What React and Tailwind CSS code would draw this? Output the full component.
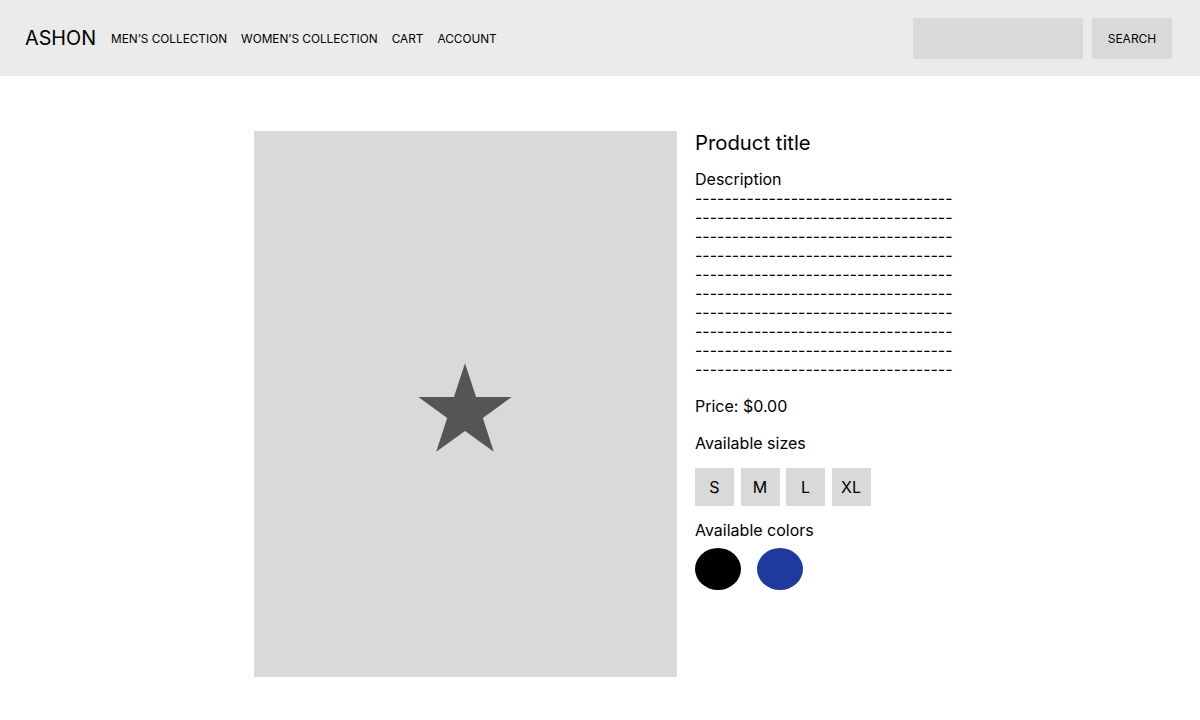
const navLinks = ["MEN’S COLLECTION", "WOMEN’S COLLECTION", "CART", "ACCOUNT"];
const sizes = ["S", "M", "L", "XL"];
const colors = ["bg-black", "bg-[#1e3a9c]"];
const dashes = "-----------------------------------";

function Header() {
  return (
    <header className="h-[76px] bg-[#ebebeb] flex items-center justify-between px-[25px]">
      <div className="flex items-center gap-[14px] pt-[2px]">
        <a className="text-[19.8px] text-black mr-[1px]">ASHON</a>
        {navLinks.map((l) => (
          <a key={l} className="text-[11.8px] text-black pt-[1px]">
            {l}
          </a>
        ))}
      </div>
      <div className="flex items-center gap-[9px] pr-[3px]">
        <input className="w-[170px] h-[41px] bg-[#d9d9d9] outline-none px-2" />
        <button className="w-[80px] h-[41px] bg-[#d9d9d9] text-[12px] text-black pt-[1px]">SEARCH</button>
      </div>
    </header>
  );
}

function Star() {
  return (
    <svg width="98" height="89" viewBox="0 0 98.4 89" className="mt-[7px] -ml-[2px]">
      <polygon
        fill="#555555"
        points="49.2,0 60.3,34 96,34 67.1,55 78.1,89 49.2,68 20.3,89 31.3,55 2.4,34 38.1,34"
      />
    </svg>
  );
}

export default function App() {
  return (
    <div className="min-h-[720px] bg-white text-black font-['Inter',sans-serif]">
      <Header />
      <main className="flex gap-[18px] pl-[254px] pt-[55px]">
        <div className="w-[423px] h-[546px] bg-[#d9d9d9] flex items-center justify-center shrink-0">
          <Star />
        </div>
        <div className="flex flex-col">
          <h1 className="text-[20.3px] leading-[24px]">Product title</h1>
          <div className="mt-[14.5px] text-[16px] leading-[19px]">
            <p>Description</p>
            {Array.from({ length: 10 }).map((_, i) => (
              <p key={i} className="whitespace-nowrap">{dashes}</p>
            ))}
          </div>
          <p className="mt-[18px] text-[16px] leading-[19px]">Price: $0.00</p>
          <p className="mt-[18px] text-[16px] leading-[19px]">Available sizes</p>
          <div className="mt-[15.5px] flex gap-[6.5px]">
            {sizes.map((s) => (
              <button key={s} className="w-[39px] h-[38px] bg-[#d9d9d9] text-[16px] flex items-center justify-center">
                {s}
              </button>
            ))}
          </div>
          <p className="mt-[14.5px] text-[16px] leading-[19px]">Available colors</p>
          <div className="mt-[8.5px] flex gap-[16px]">
            {colors.map((c) => (
              <div key={c} className={`w-[46px] h-[42px] rounded-[50%] ${c}`} />
            ))}
          </div>
        </div>
      </main>
    </div>
  );
}
